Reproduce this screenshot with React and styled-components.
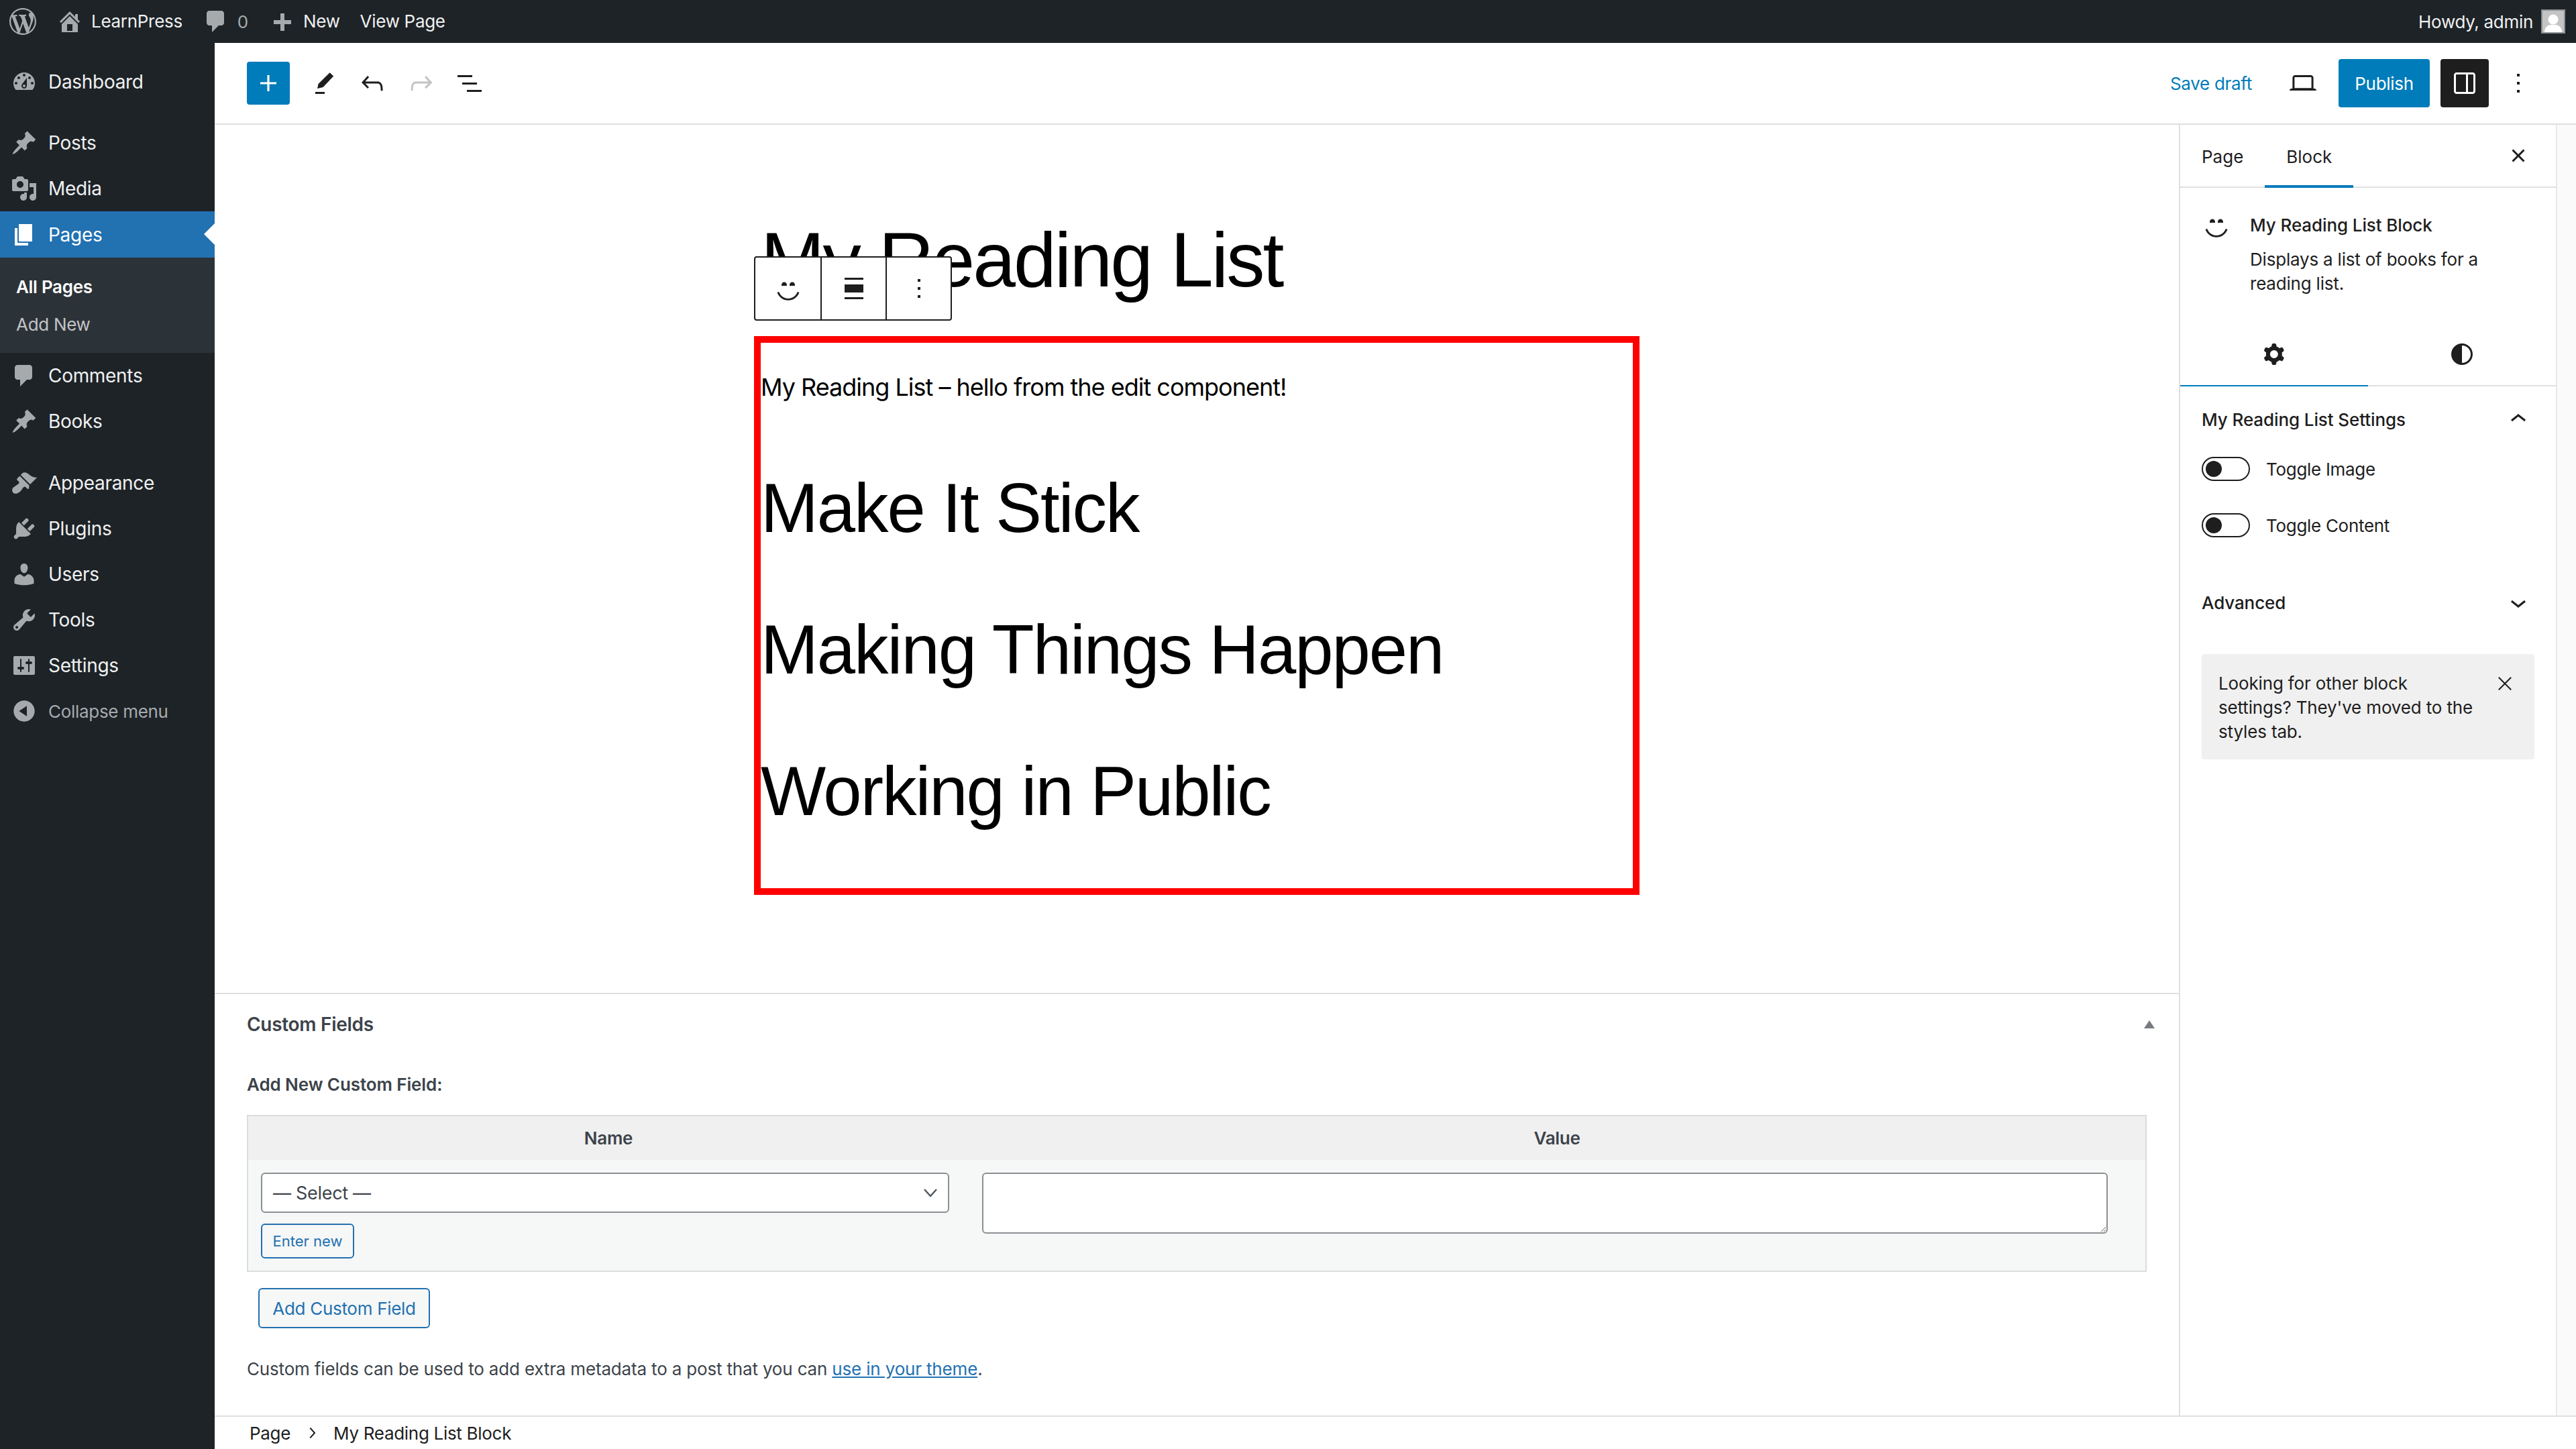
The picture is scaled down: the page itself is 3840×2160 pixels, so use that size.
import styled, { createGlobalStyle } from 'styled-components';

const GlobalStyle = createGlobalStyle`
  html, body {
    margin: 0;
    padding: 0;
    background: #fff;
  }
  * {
    box-sizing: border-box;
  }
  body {
    font-family: Inter, "Liberation Sans", sans-serif;
    font-size: 26px;
    color: #1e1e1e;
    letter-spacing: -0.3px;
    -webkit-font-smoothing: antialiased;
  }
`;

const DASH = {
  wp: 'M20 10c0-5.51-4.49-10-10-10C4.48 0 0 4.49 0 10c0 5.52 4.48 10 10 10 5.51 0 10-4.48 10-10zM7.78 15.37L4.37 6.22c.55-.02 1.17-.08 1.17-.08.5-.06.44-1.13-.06-1.11 0 0-1.45.11-2.37.11-.18 0-.37 0-.58-.01C4.12 2.69 6.87 1.11 10 1.11c2.33 0 4.45.87 6.05 2.34-.68-.11-1.65.39-1.65 1.58 0 .74.45 1.36.9 2.1.35.61.55 1.36.55 2.46 0 1.49-1.4 5-1.4 5l-3.03-8.37c.54-.02.82-.17.82-.17.5-.05.44-1.25-.06-1.22 0 0-1.44.12-2.38.12-.87 0-2.33-.12-2.33-.12-.5-.03-.56 1.2-.06 1.22l.92.08 1.26 3.41zM17.41 10c.24-.64.74-1.87.43-4.25.7 1.29 1.05 2.71 1.05 4.25 0 3.29-1.73 6.24-4.4 7.78.97-2.59 1.94-5.2 2.92-7.78zM6.1 18.09C3.12 16.65 1.11 13.53 1.11 10c0-1.3.23-2.48.72-3.59C3.25 10.3 4.67 14.2 6.1 18.09zm4.03-6.63l2.58 6.98c-.86.29-1.76.45-2.71.45-.79 0-1.57-.11-2.29-.33.81-2.38 1.62-4.74 2.42-7.1z',
  home: 'M16 8.5l1.53 1.53-1.06 1.06L10 4.62l-6.47 6.47-1.06-1.06L10 2.5l4 4v-2h2v4zm-6-2.46l6 5.99V18H4v-5.97zM12 17v-5H8v5h4z',
  plus: 'M17 9v3h-5v5H9v-5H4V9h5V4h3v5h5z',
  dashboard: 'M3.76 16h12.48c1.1-1.37 1.76-3.11 1.76-5 0-4.42-3.58-8-8-8s-8 3.58-8 8c0 1.89.66 3.63 1.76 5zM10 4c.55 0 1 .45 1 1s-.45 1-1 1-1-.45-1-1 .45-1 1-1zM6 6c.55 0 1 .45 1 1s-.45 1-1 1-1-.45-1-1 .45-1 1-1zm8 0c.55 0 1 .45 1 1s-.45 1-1 1-1-.45-1-1 .45-1 1-1zm-5.37 5.55L12 7v6c0 1.1-.9 2-2 2s-2-.9-2-2c0-.57.24-1.08.63-1.45zM4 10c.55 0 1 .45 1 1s-.45 1-1 1-1-.45-1-1 .45-1 1-1zm12 0c.55 0 1 .45 1 1s-.45 1-1 1-1-.45-1-1 .45-1 1-1zm-5 3c0-.55-.45-1-1-1s-1 .45-1 1 .45 1 1 1 1-.45 1-1z',
  pin: 'M10.44 3.02l1.82-1.82 6.36 6.35-1.83 1.82c-1.05-.68-2.48-.57-3.41.36l-.75.75c-.92.93-1.04 2.35-.35 3.41l-1.83 1.82-2.41-2.41-2.8 2.79c-.42.42-3.38 2.71-3.8 2.29s1.86-3.39 2.28-3.81l2.79-2.79L4.1 9.36l1.83-1.82c1.05.69 2.48.57 3.4-.36l.75-.75c.93-.92 1.05-2.35.36-3.41z',
  media: 'M13 11V4c0-.55-.45-1-1-1h-1.67L9 1H5L3.67 3H2c-.55 0-1 .45-1 1v7c0 .55.45 1 1 1h10c.55 0 1-.45 1-1zM7 4.5c1.38 0 2.5 1.12 2.5 2.5S8.38 9.5 7 9.5 4.5 8.38 4.5 7 5.62 4.5 7 4.5zM14 6h5v10.5c0 1.38-1.12 2.5-2.5 2.5S14 17.88 14 16.5s1.12-2.5 2.5-2.5c.17 0 .34.02.5.05V9h-3V6zm-4 8.05V13h2v3.5c0 1.38-1.12 2.5-2.5 2.5S7 17.88 7 16.5 8.12 14 9.5 14c.17 0 .34.02.5.05z',
  page: 'M6 15V2h10v13H6zm-1 1h8v2H3V5h2v11z',
  comment: 'M5 2h9c1.1 0 2 .9 2 2v7c0 1.1-.9 2-2 2h-2l-5 5v-5H5c-1.1 0-2-.9-2-2V4c0-1.1.9-2 2-2z',
  appearance: 'M14.48 11.06L7.41 3.99l1.5-1.5c.5-.56 2.3-.47 3.51.32 1.21.8 1.43 1.28 2.91 2.1 1.18.64 2.45 1.26 4.45.85zm-.71.71L6.7 4.7 4.93 6.47c-.39.39-.39 1.02 0 1.41l1.06 1.06c.39.39.39 1.03 0 1.42-.6.6-1.43 1.11-2.21 1.69-.35.26-.7.53-1.01.84C1.43 13.23.91 14.8 1.1 15.82c.18 1.02 1.06 1.9 2.08 2.08 1.02.19 2.59-.33 3.97-1.67.31-.31.58-.66.84-1.01.58-.78 1.09-1.61 1.69-2.21.39-.39 1.03-.39 1.42 0l1.06 1.06c.39.39 1.02.39 1.41 0z',
  plugins: 'M13.11 4.36L9.87 7.6 8 5.73l3.24-3.24c.35-.34 1.05-.2 1.56.32.52.51.66 1.21.31 1.55zm-8 1.77l.91-1.12 9.01 9.01-1.19.84c-.71.71-2.63 1.16-3.82 1.16H6.14L4.9 17.26c-.59.59-1.54.59-2.12 0-.59-.58-.59-1.53 0-2.12l1.24-1.24v-3.88c0-1.13.4-3.19 1.09-3.89zm7.26 3.97l3.24-3.24c.34-.35 1.04-.21 1.55.31.52.51.66 1.21.31 1.55l-3.24 3.25z',
  users: 'M10 9.25c-2.27 0-2.73-3.44-2.73-3.44C7 4.02 7.82 2 9.97 2c2.16 0 2.98 2.02 2.71 3.81 0 0-.41 3.44-2.68 3.44zm0 2.57L12.72 10c2.39 0 4.52 2.33 4.52 4.53v2.49s-3.65 1.13-7.24 1.13c-3.65 0-7.24-1.13-7.24-1.13v-2.49c0-2.25 1.94-4.48 4.47-4.48z',
  tools: 'M16.68 9.77c-1.34 1.34-3.3 1.67-4.95.99l-5.41 6.52c-.99.99-2.59.99-3.58 0s-.99-2.59 0-3.57l6.52-5.42c-.68-1.65-.35-3.61.99-4.95 1.28-1.28 3.12-1.62 4.72-1.06l-2.89 2.89 2.82 2.82 2.86-2.87c.53 1.58.18 3.39-1.08 4.65zM3.81 16.21c.4.39 1.04.39 1.43 0 .4-.4.4-1.04 0-1.43-.39-.4-1.03-.4-1.43 0-.39.39-.39 1.03 0 1.43z',
  settings: 'M18 16V4c0-.55-.45-1-1-1H3c-.55 0-1 .45-1 1v12c0 .55.45 1 1 1h14c.55 0 1-.45 1-1zM8 11h1c.55 0 1 .45 1 1s-.45 1-1 1H8v1.5c0 .28-.22.5-.5.5s-.5-.22-.5-.5V13H6c-.55 0-1-.45-1-1s.45-1 1-1h1V5.5c0-.28.22-.5.5-.5s.5.22.5.5V11zm5-2h-1c-.55 0-1-.45-1-1s.45-1 1-1h1V5.5c0-.28.22-.5.5-.5s.5.22.5.5V7h1c.55 0 1 .45 1 1s-.45 1-1 1h-1v5.5c0 .28-.22.5-.5.5s-.5-.22-.5-.5V9z',
  collapse: 'M10 2.16c4.33 0 7.84 3.51 7.84 7.84s-3.51 7.84-7.84 7.84S2.16 14.33 2.16 10 5.71 2.16 10 2.16zm2 11.72V6.12L6.18 9.97z',
  smiley: 'M7 5.2c1.1 0 2 .89 2 2 0 .37-.11.71-.28 1C8.72 8.2 8 8 7 8s-1.72.2-1.72.2c-.17-.29-.28-.63-.28-1 0-1.11.9-2 2-2zm6 0c1.11 0 2 .89 2 2 0 .37-.11.71-.28 1 0 0-.72-.2-1.72-.2s-1.72.2-1.72.2c-.17-.29-.28-.63-.28-1 0-1.11.89-2 2-2zm-3 13.7c3.72 0 7.03-2.36 8.23-5.88l-1.32-.46C15.9 15.52 13.12 17.5 10 17.5s-5.9-1.98-6.91-4.94l-1.32.46c1.2 3.52 4.51 5.88 8.23 5.88z',
};

const WP = {
  plus: 'M18 11.2h-5.2V6h-1.6v5.2H6v1.6h5.2V18h1.6v-5.2H18z',
  pen: 'M5 18.5h7V20H5zM6.5 16l.8-3.5 8.5-8.4 2.8 2.6-7.8 8.3-4.3 1z',
  undo: 'M18.3 11.7c-.6-.6-1.4-.9-2.3-.9H6.7l2.9-3.3-1.1-1-4.5 5L8.5 16l1-1-2.7-2.7H16c.5 0 .9.2 1.3.5 1 1 1 3.4 1 4.5v.3h1.5v-.2c0-1.5 0-4.3-1.5-5.7z',
  redo: 'M15.6 6.5l-1.1 1 2.9 3.3H8c-.9 0-1.7.3-2.3.9-1.4 1.5-1.4 4.2-1.4 5.6v.2h1.5v-.3c0-1.1 0-3.5 1-4.5.3-.3.7-.5 1.3-.5h9.2L14.5 15l1.1 1.1 4.6-4.6-4.6-5z',
  listView: 'M3 6h11v1.5H3V6zm3.5 5.5h11V13h-11v-1.5zM21 17H10v1.5h11V17z',
  desktop: 'M20.5 16h-.7V8c0-1.1-.9-2-2-2H6.2c-1.1 0-2 .9-2 2v8h-.7c-.8 0-1.5.7-1.5 1.5h20c0-.8-.7-1.5-1.5-1.5zM5.7 8c0-.3.2-.5.5-.5h11.6c.3 0 .5.2.5.5v7.6H5.7V8z',
  drawer: 'M18 4H6c-1.1 0-2 .9-2 2v12c0 1.1.9 2 2 2h12c1.1 0 2-.9 2-2V6c0-1.1-.9-2-2-2zM6 18.5a.5.5 0 0 1-.5-.5V6a.5.5 0 0 1 .5-.5h7v13H6Zm12.5-.5a.5.5 0 0 1-.5.5h-3.5v-13H18a.5.5 0 0 1 .5.5v12Z',
  more: 'M13 19h-2v-2h2v2zm0-6h-2v-2h2v2zm0-6h-2V5h2v2z',
  close: 'M12 13.06l3.712 3.713 1.061-1.06L13.061 12l3.712-3.712-1.06-1.06L12 10.938 8.288 7.227l-1.061 1.06L10.939 12l-3.712 3.712 1.06 1.061L12 13.061z',
  cog: 'M10.289 4.836A1 1 0 0111.275 4h1.306a1 1 0 01.987.836l.244 1.466c.787.26 1.503.679 2.108 1.218l1.393-.522a1 1 0 011.216.437l.653 1.13a1 1 0 01-.23 1.273l-1.148.944a6.025 6.025 0 010 2.435l1.149.946a1 1 0 01.23 1.272l-.653 1.13a1 1 0 01-1.216.437l-1.394-.522c-.605.54-1.32.958-2.108 1.218l-.244 1.466a1 1 0 01-.987.836h-1.306a1 1 0 01-.986-.836l-.244-1.466a5.995 5.995 0 01-2.108-1.218l-1.394.522a1 1 0 01-1.217-.436l-.653-1.131a1 1 0 01.23-1.272l1.149-.946a6.026 6.026 0 010-2.435l-1.148-.944a1 1 0 01-.23-1.272l.653-1.131a1 1 0 011.217-.437l1.393.522a5.994 5.994 0 012.108-1.218l.244-1.466zM14.929 12a3 3 0 11-6 0 3 3 0 016 0z',
  styles: 'M12 4c-4.4 0-8 3.6-8 8s3.6 8 8 8 8-3.6 8-8-3.6-8-8-8zm0 14.5v-13c3.6 0 6.5 2.9 6.5 6.5s-2.9 6.5-6.5 6.5z',
  up: 'M6.5 12.4L12 8l5.5 4.4-.9 1.2L12 10l-4.5 3.6-1-1.2z',
  down: 'M17.5 11.6L12 16l-5.5-4.4.9-1.2L12 14l4.5-3.6 1 1.2z',
  align: 'M19 5.5H5V4h14v1.5ZM19 20H5v-1.5h14V20ZM5 9h14v6H5V9Z',
  crumb: 'M10.6 6L9.4 7l4.6 5-4.6 5 1.2 1 5.4-6z',
};

function Dash({ d, size = 40, color = '#a7aaad' }) {
  return (
    <svg width={size} height={size} viewBox="0 0 20 20" fill={color} style={{ flexShrink: 0 }}>
      <path d={d} />
    </svg>
  );
}

function Wp({ d, size = 48, color = '#1e1e1e' }) {
  return (
    <svg width={size} height={size} viewBox="0 0 24 24" fill={color} fillRule="evenodd" style={{ flexShrink: 0 }}>
      <path d={d} />
    </svg>
  );
}

const MENU = [
  { label: 'Dashboard', icon: DASH.dashboard, gap: 23 },
  { label: 'Posts', icon: DASH.pin },
  { label: 'Media', icon: DASH.media },
  { label: 'Pages', icon: DASH.page, current: true },
  { label: 'Comments', icon: DASH.comment },
  { label: 'Books', icon: DASH.pin, gap: 24 },
  { label: 'Appearance', icon: DASH.appearance },
  { label: 'Plugins', icon: DASH.plugins },
  { label: 'Users', icon: DASH.users },
  { label: 'Tools', icon: DASH.tools },
  { label: 'Settings', icon: DASH.settings },
];

export default function App() {
  return (
    <>
      <GlobalStyle />
      <Page>
        <AdminBar>
          <BarIcon $left={14}>
            <Dash d={DASH.wp} />
          </BarIcon>
          <BarIcon $left={30}>
            <Dash d={DASH.home} />
          </BarIcon>
          <BarText $left={12}>LearnPress</BarText>
          <BarIcon $left={30}>
            <Dash d={DASH.comment} />
          </BarIcon>
          <BarCount>0</BarCount>
          <BarIcon $left={30}>
            <Dash d={DASH.plus} />
          </BarIcon>
          <BarText $left={12}>New</BarText>
          <BarText $left={30}>View Page</BarText>
          <Howdy>Howdy, admin</Howdy>
          <Avatar>
            <svg width="32" height="32" viewBox="0 0 32 32" fill="#fff">
              <circle cx="16" cy="13" r="7.5" />
              <path d="M3 32c0-6 3-10 9-11h8c6 1 9 5 9 11z" />
            </svg>
          </Avatar>
        </AdminBar>
        <Body>
          <Sidebar>
            {MENU.map((item) => (
              <div key={item.label}>
                <MenuItem $current={item.current}>
                  <Dash d={item.icon} color={item.current ? '#fff' : '#a7aaad'} />
                  <span>{item.label}</span>
                </MenuItem>
                {item.current && (
                  <SubMenu>
                    <SubItem $current>All Pages</SubItem>
                    <SubItem>Add New</SubItem>
                  </SubMenu>
                )}
                {item.gap && <Separator $height={item.gap} />}
              </div>
            ))}
            <CollapseItem>
              <Dash d={DASH.collapse} />
              <span>Collapse menu</span>
            </CollapseItem>
          </Sidebar>
          <Editor>
            <Header>
              <Inserter>
                <Wp d={WP.plus} color="#fff" />
              </Inserter>
              <IconButton $left={28}>
                <Wp d={WP.pen} />
              </IconButton>
              <IconButton $left={23}>
                <Wp d={WP.undo} />
              </IconButton>
              <IconButton $left={25}>
                <Wp d={WP.redo} color="#c4c4c4" />
              </IconButton>
              <IconButton $left={24}>
                <Wp d={WP.listView} />
              </IconButton>
              <SaveDraft>Save draft</SaveDraft>
              <IconButton $left={52}>
                <Wp d={WP.desktop} />
              </IconButton>
              <Publish>Publish</Publish>
              <SidebarToggle>
                <Wp d={WP.drawer} color="#fff" />
              </SidebarToggle>
              <IconButton $left={20}>
                <Wp d={WP.more} />
              </IconButton>
            </Header>
            <Workspace>
              <MainColumn>
                <Canvas>
                  <Content>
                    <PostTitle>My Reading List</PostTitle>
                    <BlockToolbar>
                      <ToolCell>
                        <Dash d={DASH.smiley} color="#1e1e1e" />
                      </ToolCell>
                      <ToolCell>
                        <Wp d={WP.align} />
                      </ToolCell>
                      <ToolCell>
                        <Wp d={WP.more} />
                      </ToolCell>
                    </BlockToolbar>
                    <ReadingList>
                      <Hello>My Reading List – hello from the edit component!</Hello>
                      <BookTitle>Make It Stick</BookTitle>
                      <BookTitle>Making Things Happen</BookTitle>
                      <BookTitle>Working in Public</BookTitle>
                    </ReadingList>
                  </Content>
                </Canvas>
                <MetaBox>
                  <MetaHead>
                    <span>Custom Fields</span>
                    <Triangle />
                  </MetaHead>
                  <MetaLabel>Add New Custom Field:</MetaLabel>
                  <FieldTable>
                    <FieldHead>Name</FieldHead>
                    <FieldHead>Value</FieldHead>
                    <NameCell>
                      <FakeSelect>
                        <span>— Select —</span>
                        <svg width="24" height="24" viewBox="0 0 24 24" fill="none" stroke="#50575e" strokeWidth="2.4">
                          <path d="M3 7l9 10 9-10" />
                        </svg>
                      </FakeSelect>
                      <EnterNew>Enter new</EnterNew>
                    </NameCell>
                    <ValueCell>
                      <ValueInput />
                    </ValueCell>
                  </FieldTable>
                  <AddField>Add Custom Field</AddField>
                  <MetaNote>
                    Custom fields can be used to add extra metadata to a post that you can{' '}
                    <NoteLink>use in your theme</NoteLink>.
                  </MetaNote>
                </MetaBox>
              </MainColumn>
              <Inspector>
                <TabRow>
                  <Tab>Page</Tab>
                  <Tab $active>Block</Tab>
                  <CloseButton>
                    <Wp d={WP.close} />
                  </CloseButton>
                </TabRow>
                <BlockCard>
                  <BlockIcon>
                    <Dash d={DASH.smiley} color="#1e1e1e" />
                  </BlockIcon>
                  <div>
                    <BlockName>My Reading List Block</BlockName>
                    <BlockDesc>Displays a list of books for a reading list.</BlockDesc>
                  </div>
                </BlockCard>
                <SubTabs>
                  <SubTab $active>
                    <Wp d={WP.cog} />
                  </SubTab>
                  <SubTab>
                    <Wp d={WP.styles} />
                  </SubTab>
                </SubTabs>
                <PanelHead>
                  <span>My Reading List Settings</span>
                  <Wp d={WP.up} />
                </PanelHead>
                <ToggleRow>
                  <Switch />
                  <span>Toggle Image</span>
                </ToggleRow>
                <ToggleRow>
                  <Switch />
                  <span>Toggle Content</span>
                </ToggleRow>
                <PanelHead>
                  <span>Advanced</span>
                  <Wp d={WP.down} />
                </PanelHead>
                <Notice>
                  <NoticeText>Looking for other block settings? They've moved to the styles tab.</NoticeText>
                  <NoticeClose>
                    <svg width="48" height="48" viewBox="0 0 24 24" fill="none" stroke="#1e1e1e" strokeWidth="1">
                      <path d="M7.4 7.4l9.2 9.2M16.6 7.4l-9.2 9.2" />
                    </svg>
                  </NoticeClose>
                </Notice>
              </Inspector>
              <Gutter />
            </Workspace>
            <Breadcrumbs>
              <span>Page</span>
              <Wp d={WP.crumb} size={32} />
              <span>My Reading List Block</span>
            </Breadcrumbs>
          </Editor>
        </Body>
      </Page>
    </>
  );
}

const Page = styled.div`
  width: 3840px;
  height: 2160px;
  display: flex;
  flex-direction: column;
  overflow: hidden;
`;

const AdminBar = styled.header`
  height: 64px;
  flex-shrink: 0;
  display: flex;
  align-items: center;
  padding-right: 16px;
  background: #1d2327;
  color: #f0f0f1;
`;

const BarIcon = styled.span`
  display: flex;
  margin-left: ${(p) => p.$left}px;
`;

const BarText = styled.span`
  margin-left: ${(p) => p.$left}px;
  line-height: 64px;
`;

const BarCount = styled.span`
  margin-left: 12px;
  color: #a7aaad;
`;

const Howdy = styled.span`
  margin-left: auto;
`;

const Avatar = styled.span`
  width: 36px;
  height: 36px;
  margin-left: 12px;
  border: 2px solid #8c8f94;
  background: #c4c4c4;
  display: flex;
  overflow: hidden;
`;

const Body = styled.div`
  flex: 1;
  display: flex;
  min-height: 0;
`;

const Sidebar = styled.nav`
  width: 320px;
  flex-shrink: 0;
  padding-top: 24px;
  background: #1d2327;
`;

const MenuItem = styled.div`
  position: relative;
  height: ${(p) => (p.$current ? 69 : 68)}px;
  display: flex;
  align-items: center;
  gap: 16px;
  padding-left: 16px;
  font-size: 28px;
  color: ${(p) => (p.$current ? '#fff' : '#f0f0f1')};
  background: ${(p) => (p.$current ? '#2271b1' : 'transparent')};

  ${(p) =>
    p.$current &&
    `
    &::after {
      content: '';
      position: absolute;
      right: 0;
      top: 18px;
      border: 16px solid transparent;
      border-right-color: #fff;
      border-left-width: 0;
    }
  `}
`;

const SubMenu = styled.div`
  height: 142px;
  padding-top: 16px;
  background: #2c3338;
`;

const SubItem = styled.div`
  height: 56px;
  padding-left: 24px;
  line-height: 56px;
  font-weight: ${(p) => (p.$current ? 600 : 400)};
  color: ${(p) => (p.$current ? '#fff' : '#c3c4c7')};
`;

const Separator = styled.div`
  height: ${(p) => p.$height}px;
`;

const CollapseItem = styled.div`
  height: 68px;
  display: flex;
  align-items: center;
  gap: 16px;
  padding-left: 16px;
  color: #a7aaad;
`;

const Editor = styled.main`
  flex: 1;
  min-width: 0;
  display: flex;
  flex-direction: column;
`;

const Header = styled.div`
  height: 122px;
  flex-shrink: 0;
  display: flex;
  align-items: center;
  padding: 0 62px 0 48px;
  border-bottom: 2px solid #e0e0e0;
`;

const Inserter = styled.div`
  width: 64px;
  height: 64px;
  display: flex;
  align-items: center;
  justify-content: center;
  border-radius: 4px;
  background: #007cba;
`;

const IconButton = styled.div`
  width: 48px;
  height: 48px;
  margin-left: ${(p) => p.$left}px;
  display: flex;
`;

const SaveDraft = styled.span`
  margin-left: auto;
  color: #007cba;
`;

const Publish = styled.div`
  width: 136px;
  height: 72px;
  margin-left: 29px;
  display: flex;
  align-items: center;
  justify-content: center;
  border-radius: 4px;
  background: #007cba;
  color: #fff;
`;

const SidebarToggle = styled.div`
  width: 72px;
  height: 72px;
  margin-left: 16px;
  display: flex;
  align-items: center;
  justify-content: center;
  border-radius: 4px;
  background: #1e1e1e;
`;

const Workspace = styled.div`
  flex: 1;
  min-height: 0;
  display: flex;
  border-bottom: 2px solid #e0e0e0;
`;

const MainColumn = styled.div`
  flex: 1;
  min-width: 0;
  display: flex;
  flex-direction: column;
`;

const Canvas = styled.div`
  flex: 1;
  min-height: 0;
  padding-top: 134px;
`;

const Content = styled.div`
  position: relative;
  width: 1320px;
  margin: 0 auto;
`;

const PostTitle = styled.h1`
  margin: 0;
  padding-left: 10px;
  font-family: "Liberation Sans", Inter, sans-serif;
  font-size: 114.5px;
  line-height: 134px;
  font-weight: 400;
  letter-spacing: -2.9px;
  color: #000;
`;

const BlockToolbar = styled.div`
  position: absolute;
  left: 0;
  top: 62px;
  display: flex;
  height: 96px;
  border: 2px solid #1e1e1e;
  border-radius: 4px;
  background: #fff;
`;

const ToolCell = styled.div`
  width: 97px;
  display: flex;
  align-items: center;
  justify-content: center;

  & + & {
    border-left: 2px solid #1e1e1e;
  }
`;

const ReadingList = styled.section`
  height: 833px;
  margin-top: 47px;
  padding-top: 41px;
  border: 10px solid #f00;
  color: #000;
`;

const Hello = styled.p`
  margin: 0 0 71px;
  font-size: 36px;
  line-height: 50px;
  letter-spacing: -1px;
`;

const BookTitle = styled.h2`
  margin: 41px 0 0;
  font-family: "Liberation Sans", Inter, sans-serif;
  font-size: 103px;
  line-height: 170px;
  font-weight: 400;
  letter-spacing: -2px;
`;

const MetaBox = styled.section`
  flex-shrink: 0;
  padding: 0 48px 51px;
  border-top: 2px solid #e0e0e0;
  color: #3c434a;
`;

const MetaHead = styled.div`
  height: 90px;
  margin-right: -12px;
  display: flex;
  align-items: center;
  justify-content: space-between;
  font-size: 28px;
  font-weight: 600;
`;

const Triangle = styled.span`
  border-left: 8px solid transparent;
  border-right: 8px solid transparent;
  border-bottom: 12px solid #787c82;
`;

const MetaLabel = styled.div`
  margin-top: 27px;
  line-height: 36px;
  font-size: 26px;
  font-weight: 600;
  letter-spacing: -0.1px;
`;

const FieldTable = styled.div`
  margin-top: 27px;
  display: grid;
  grid-template-columns: 1074px 1fr;
  border: 2px solid #dcdcde;
  background: #f6f7f7;
`;

const FieldHead = styled.div`
  height: 65px;
  display: flex;
  align-items: center;
  justify-content: center;
  background: #f0f0f1;
  font-size: 26px;
  font-weight: 600;
`;

const NameCell = styled.div`
  padding: 19px 0 18px 19px;
`;

const FakeSelect = styled.div`
  width: 1026px;
  height: 60px;
  display: flex;
  align-items: center;
  justify-content: space-between;
  padding: 0 14px 0 16px;
  border: 2px solid #8c8f94;
  border-radius: 6px;
  background: #fff;
  font-size: 27px;
`;

const EnterNew = styled.div`
  width: 139px;
  height: 52px;
  margin-top: 16px;
  display: flex;
  align-items: center;
  justify-content: center;
  border: 2px solid #2271b1;
  border-radius: 6px;
  font-size: 22px;
  letter-spacing: 0;
  color: #2271b1;
`;

const ValueCell = styled.div`
  padding: 19px 56px 0 20px;
`;

const ValueInput = styled.textarea`
  display: block;
  width: 100%;
  height: 91px;
  border: 2px solid #8c8f94;
  border-radius: 6px;
  background: #fff;
`;

const AddField = styled.div`
  width: 256px;
  height: 60px;
  margin: 24px 0 0 17px;
  display: flex;
  align-items: center;
  justify-content: center;
  border: 2px solid #2271b1;
  border-radius: 6px;
  background: #f6f7f7;
  color: #2271b1;
`;

const MetaNote = styled.p`
  margin: 43px 0 0;
  line-height: 36px;
  font-size: 26px;
  letter-spacing: -0.17px;
`;

const NoteLink = styled.a`
  color: #2271b1;
  text-decoration: underline;
`;

const Inspector = styled.aside`
  width: 562px;
  flex-shrink: 0;
  border-left: 2px solid #e0e0e0;
`;

const TabRow = styled.div`
  height: 94px;
  display: flex;
  align-items: stretch;
  padding-right: 32px;
  border-bottom: 2px solid #e0e0e0;
`;

const Tab = styled.div`
  display: flex;
  align-items: center;
  padding: 0 32px;
  letter-spacing: 0;
  box-shadow: ${(p) => (p.$active ? 'inset 0 -4px 0 #007cba' : 'none')};
  margin-bottom: -2px;
`;

const CloseButton = styled.div`
  margin-left: auto;
  display: flex;
  align-items: center;
`;

const BlockCard = styled.div`
  height: 200px;
  display: flex;
  gap: 30px;
  padding: 38px 32px 0 34px;
`;

const BlockIcon = styled.span`
  display: flex;
  align-self: flex-start;
  margin-top: -2px;
`;

const BlockName = styled.div`
  line-height: 36px;
  font-weight: 500;
  letter-spacing: -0.1px;
`;

const BlockDesc = styled.div`
  width: 360px;
  margin-top: 15px;
  line-height: 36px;
  letter-spacing: -0.2px;
`;

const SubTabs = styled.div`
  height: 96px;
  display: grid;
  grid-template-columns: 1fr 1fr;
  padding-top: 2px;
  border-bottom: 2px solid #e0e0e0;
`;

const SubTab = styled.div`
  display: flex;
  align-items: center;
  justify-content: center;
  box-shadow: ${(p) => (p.$active ? '0 2px 0 #007cba' : 'none')};
`;

const PanelHead = styled.div`
  height: 100px;
  margin-bottom: 5px;
  display: flex;
  align-items: center;
  justify-content: space-between;
  padding: 0 32px 2px;
  font-weight: 500;
  letter-spacing: -0.1px;
`;

const ToggleRow = styled.div`
  height: 36px;
  margin-bottom: 48px;
  display: flex;
  align-items: center;
  gap: 24px;
  padding-left: 32px;
  color: #1e1e1e;
`;

const Switch = styled.span`
  position: relative;
  width: 72px;
  height: 36px;
  border: 2px solid #1e1e1e;
  border-radius: 18px;

  &::after {
    content: '';
    position: absolute;
    left: 4px;
    top: 4px;
    width: 24px;
    height: 24px;
    border-radius: 50%;
    background: #1e1e1e;
  }
`;

const Notice = styled.div`
  margin: 26px 32px 0;
  padding: 26px 20px 23px 25px;
  display: flex;
  justify-content: space-between;
  border-radius: 4px;
  background: #f0f0f0;
  letter-spacing: -0.15px;
`;

const NoticeText = styled.div`
  width: 390px;
  line-height: 36px;
`;

const NoticeClose = styled.span`
  display: flex;
  height: 48px;
  margin-top: -6px;
`;

const Gutter = styled.div`
  width: 30px;
  flex-shrink: 0;
  border-left: 2px solid #e8e8e8;
  background: #fafafa;
`;

const Breadcrumbs = styled.div`
  height: 48px;
  flex-shrink: 0;
  display: flex;
  align-items: center;
  gap: 16px;
  padding-left: 52px;
  color: #1e1e1e;
`;
